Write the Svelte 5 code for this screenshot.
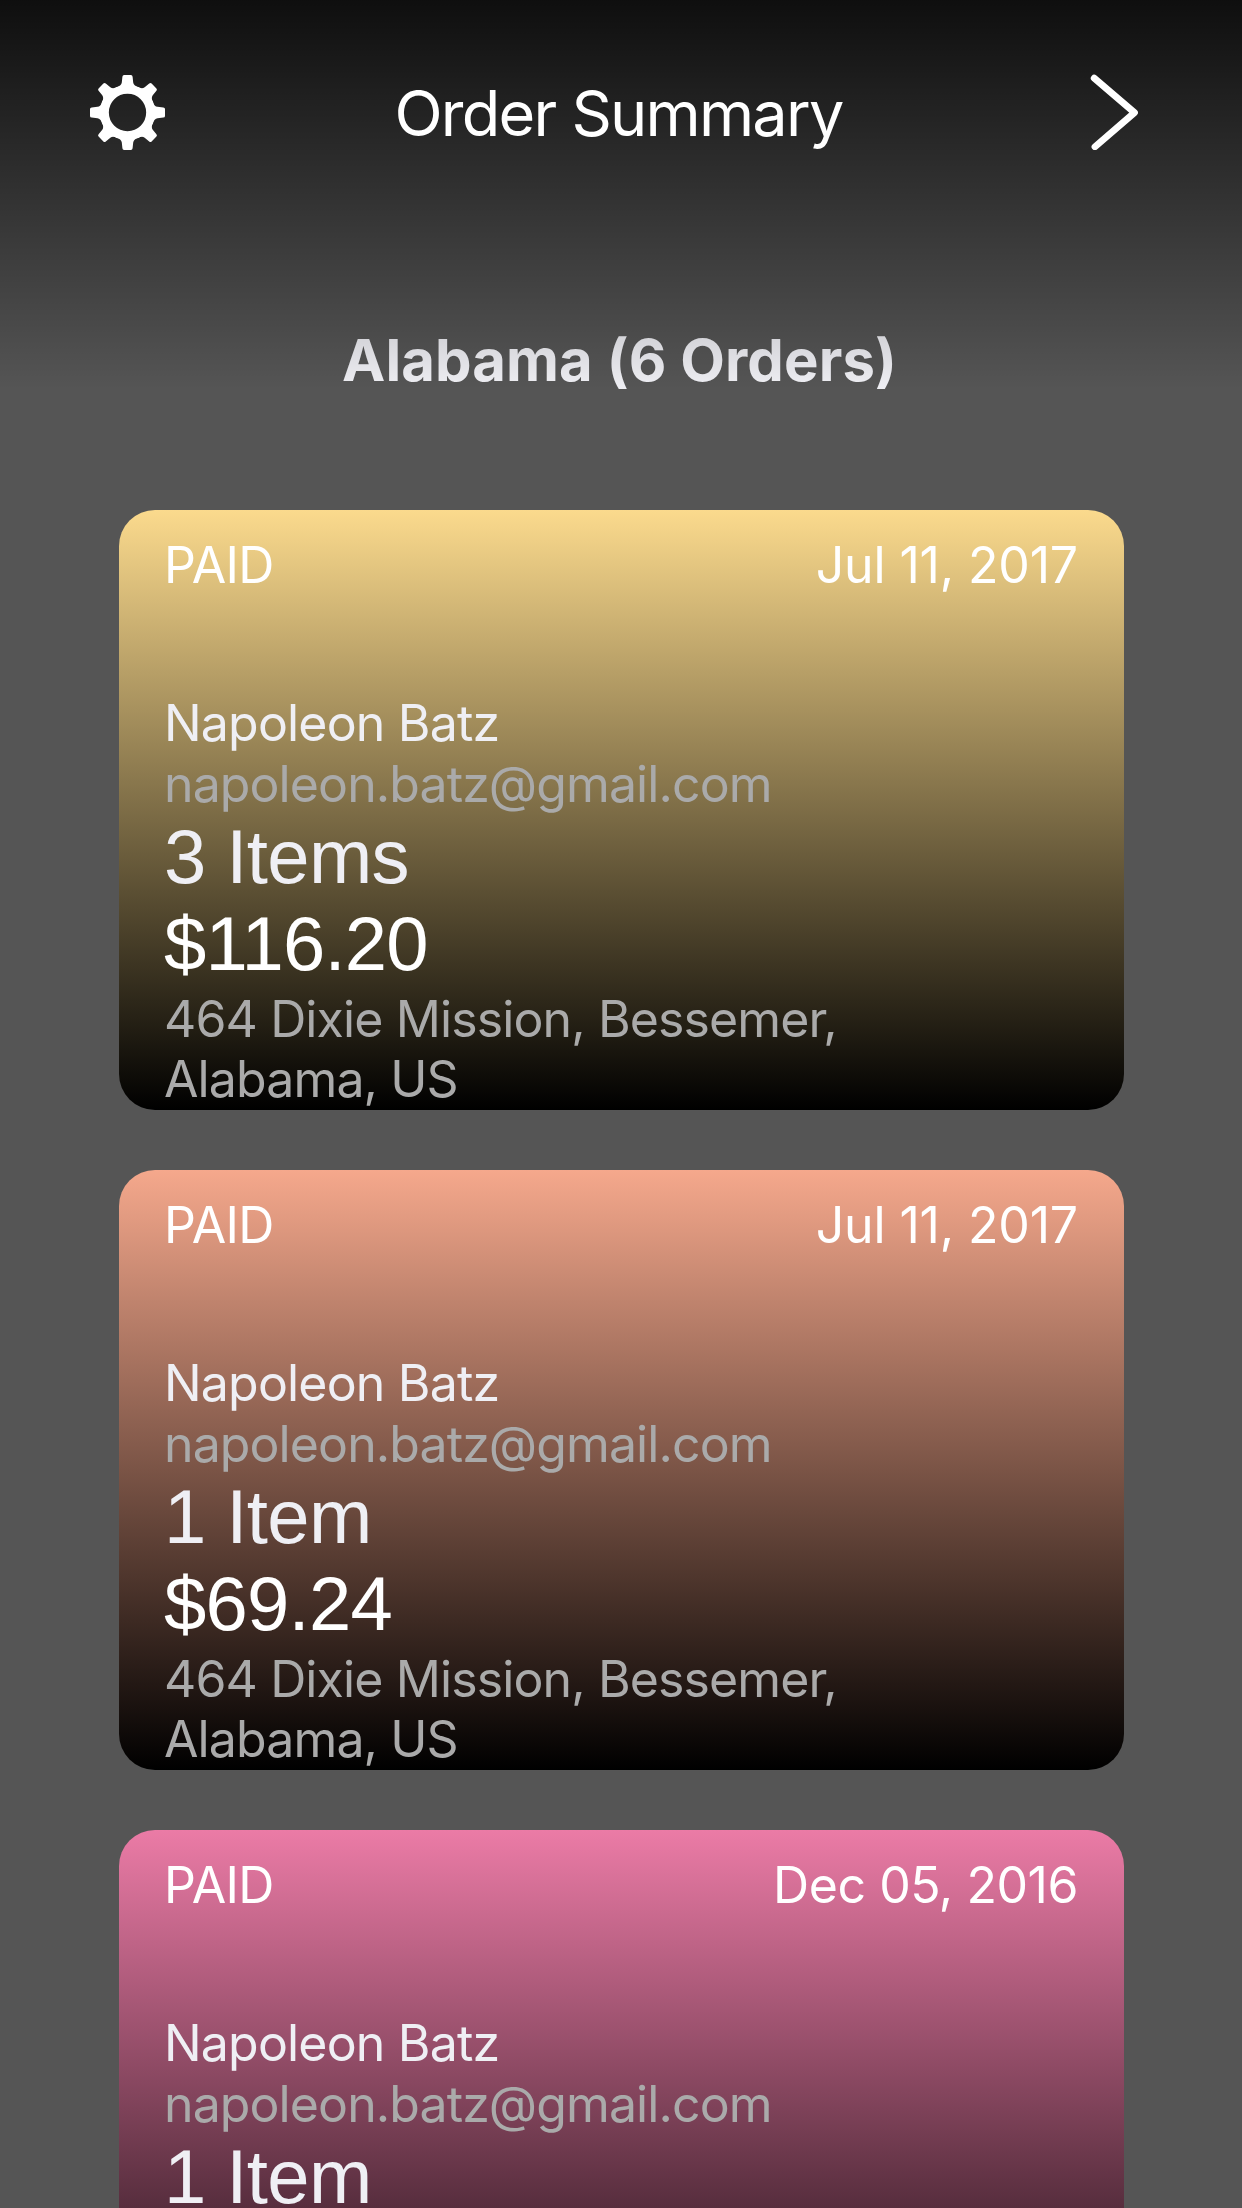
<script>
  const address = '464 Dixie Mission, Bessemer, Alabama, US';
  const orders = [
    { status: 'PAID', date: 'Jul 11, 2017', name: 'Napoleon Batz', email: 'napoleon.batz@gmail.com', items: '3 Items', total: '$116.20', address, tone: 'gold' },
    { status: 'PAID', date: 'Jul 11, 2017', name: 'Napoleon Batz', email: 'napoleon.batz@gmail.com', items: '1 Item', total: '$69.24', address, tone: 'peach' },
    { status: 'PAID', date: 'Dec 05, 2016', name: 'Napoleon Batz', email: 'napoleon.batz@gmail.com', items: '1 Item', tone: 'pink' }
  ];
  const teeth = [0, 45, 90, 135, 180, 225, 270, 315];
</script>

<div class="screen">
  <header class="bar">
    <svg class="gear" viewBox="-38.5 -38.5 76 76" fill="#fff" aria-hidden="true">
      <circle r="23.1" fill="none" stroke="#fff" stroke-width="8.9" />
      {#each teeth as angle}
        <path transform="rotate({angle})" d="M-12-23L-10.6-25.3Q-6.2-26.8-5.7-30L-5.1-35.8Q-4.9-37.5-3.4-37.5H3.4Q4.9-37.5 5.1-35.8L5.7-30Q6.2-26.8 10.6-25.3L12-23Z" />
      {/each}
    </svg>
    <h1>Order Summary</h1>
    <svg class="next" viewBox="0 0 52 76" fill="none" stroke="#fff" stroke-width="6.8" stroke-linecap="round" stroke-linejoin="round" aria-hidden="true">
      <path d="M4.2 4.2L44.5 38.6L5 72.8" />
    </svg>
  </header>
  <main>
    <h2>Alabama (6 Orders)</h2>
    {#each orders as order}
      <article class="card {order.tone}">
        <div class="top">
          <span class="status">{order.status}</span>
          <span class="date" class:december={order.date.startsWith('Dec')}>{order.date}</span>
        </div>
        <p class="name">{order.name}</p>
        <p class="email">{order.email}</p>
        <p class="items">{order.items}</p>
        {#if order.total}
          <p class="total">{order.total}</p>
          <p class="address">{order.address}</p>
        {/if}
      </article>
    {/each}
  </main>
</div>

<style>
  .screen {
    position: relative;
    width: 1242px;
    height: 2208px;
    overflow: hidden;
    background: #555;
    font-family: Inter, sans-serif;
  }
  h1, h2, p {
    margin: 0;
    font-weight: 400;
    white-space: nowrap;
  }
  /* Fading bar that lies over the scrolling list */
  .bar {
    position: absolute;
    inset: 0 0 auto;
    z-index: 1;
    box-sizing: border-box;
    height: 390px;
    padding: 74px 100px 0 89px;
    display: flex;
    align-items: flex-start;
    background: linear-gradient(rgba(0, 0, 0, 0.83), rgba(0, 0, 0, 0));
  }
  .gear {
    width: 76px;
    height: 76px;
    flex: none;
  }
  .next {
    width: 52px;
    height: 76px;
    margin-left: 18px;
    flex: none;
  }
  h1 {
    flex: 1;
    text-align: center;
    font-size: 63px;
    line-height: 78px;
    letter-spacing: -1.77px;
    color: #fff;
  }
  main {
    display: flex;
    flex-direction: column;
    gap: 60px;
    padding: 325px 118px 0 119px;
  }
  h2 {
    margin-bottom: 55px;
    padding-right: 4px;
    font-size: 58px;
    font-weight: 700;
    line-height: 70px;
    letter-spacing: 0.1px;
    text-align: center;
    color: #efeff4;
  }
  .card {
    box-sizing: border-box;
    height: 600px;
    padding: 25px 46px 0 45px;
    border-radius: 36px;
    overflow: hidden;
    flex: none;
    font-size: 50px;
    line-height: 61px;
  }
  .gold { background: linear-gradient(#fbda8d, #000); }
  .peach { background: linear-gradient(#f5a88c, #000); }
  .pink { background: linear-gradient(#eb7ba6, #000); }
  .top {
    display: flex;
    justify-content: space-between;
    height: 158px;
    color: #fff;
  }
  .status { letter-spacing: -0.6px; }
  .date { letter-spacing: -0.15px; }
  .date.december { letter-spacing: -0.45px; }
  .name {
    letter-spacing: -0.82px;
    color: #efeff4;
  }
  .email {
    letter-spacing: -0.9px;
    color: #aaa;
  }
  .items, .total {
    font-family: "Liberation Sans", sans-serif;
    font-size: 76px;
    line-height: 87px;
  }
  .items {
    margin-top: -2px;
    letter-spacing: -0.6px;
    color: #efeff4;
  }
  .total {
    letter-spacing: -0.75px;
    color: #fff;
  }
  .address {
    width: 760px;
    margin-top: 2px;
    white-space: normal;
    line-height: 60px;
    letter-spacing: -0.88px;
    color: #aaa;
  }
</style>
